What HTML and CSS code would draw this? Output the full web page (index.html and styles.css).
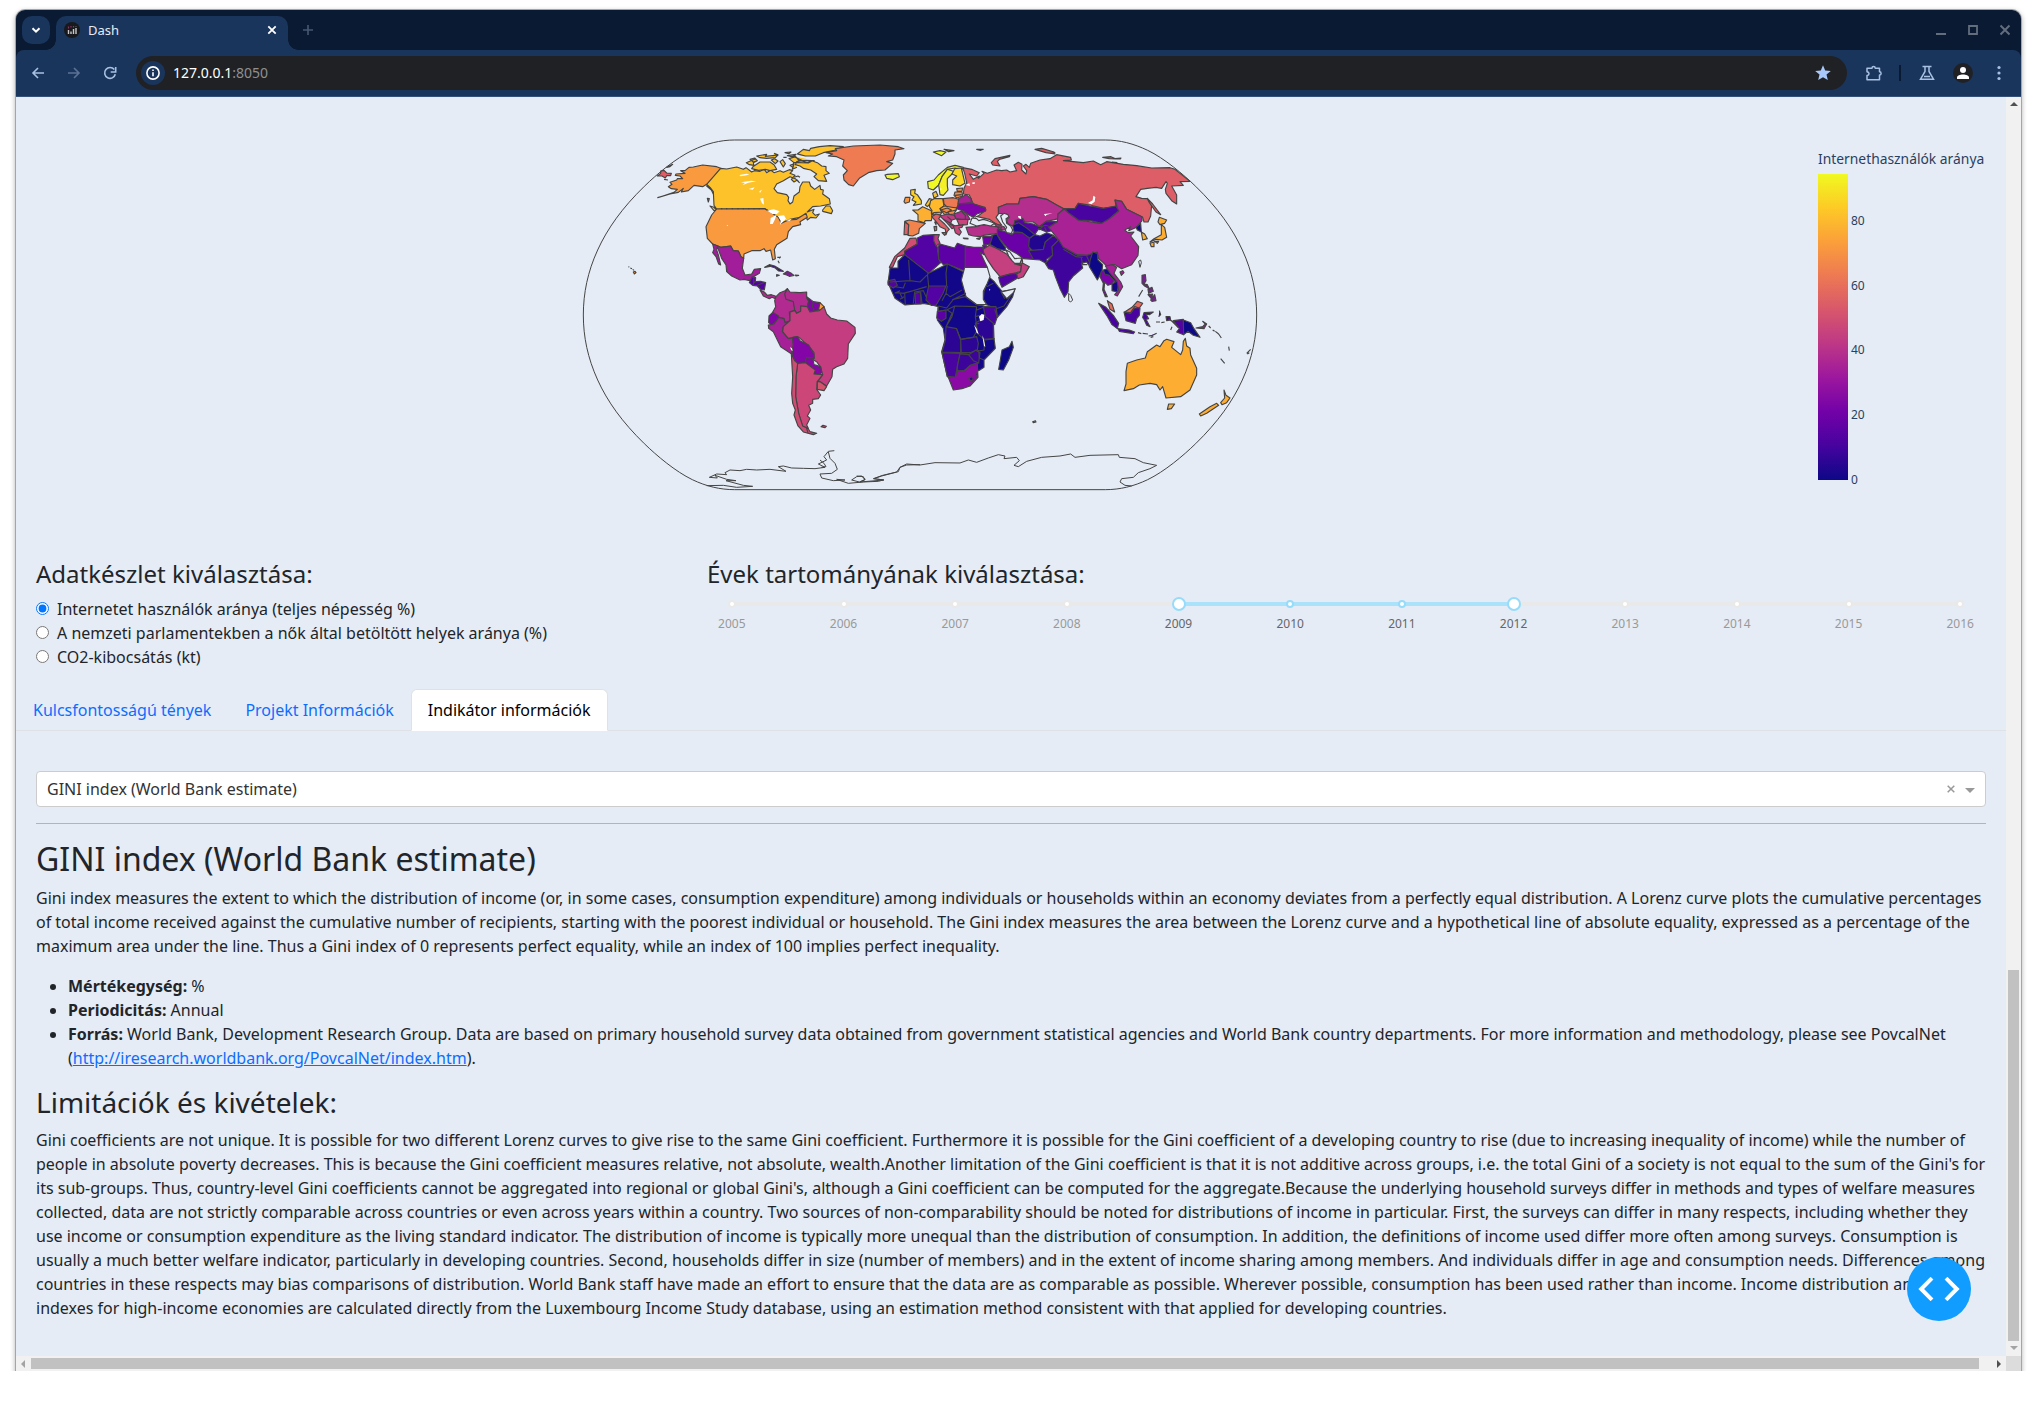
FILE: index.html
```html
<!DOCTYPE html>
<html lang="hu">
<head>
<meta charset="utf-8">
<title>Dash</title>
<link rel="stylesheet" href="styles.css">
</head>
<body>
<div class="window">
  <div class="tabstrip">
    <span class="tab-search"><svg width="28" height="28" viewBox="0 0 28 28"><path d="M10.5 12.2l3.5 3.5 3.5-3.5" fill="none" stroke="#fff" stroke-width="2"/></svg></span>
    <div class="browser-tab">
      <svg class="favicon" width="16" height="16" viewBox="0 0 16 16"><circle cx="8" cy="8" r="8" fill="#17191c"/><path d="M4.5 8v4M7 9.5V12M9.500 7v5M12 6v6" stroke="#c9c9c9" stroke-width="1.400"/><path d="M4.500 4.500v2M7 4v1.500" stroke="#8e2f62" stroke-width="1.200"/><path d="M9.500 4v1.500M12 4v1" stroke="#555" stroke-width="1.200"/></svg>
      <span class="browser-tab-title">Dash</span>
      <svg width="10" height="10" viewBox="0 0 10 10"><path d="M1.300 1.300l7.400 7.400M8.700 1.300L1.300 8.700" stroke="#fff" stroke-width="1.800"/></svg>
    </div>
    <svg class="new-tab" width="12" height="12" viewBox="0 0 12 12"><path d="M6 1v10M1 6h10" stroke="#465872" stroke-width="1.600"/></svg>
    <div class="window-buttons">
      <svg width="12" height="12" viewBox="0 0 12 12"><path d="M1 10h10" stroke="#626d7e" stroke-width="2"/></svg>
      <svg width="12" height="12" viewBox="0 0 12 12"><path d="M2 2h8v8H2z" fill="none" stroke="#626d7e" stroke-width="1.800"/></svg>
      <svg width="12" height="12" viewBox="0 0 12 12"><path d="M1.500 1.500l9 9M10.500 1.500l-9 9" stroke="#626d7e" stroke-width="2"/></svg>
    </div>
  </div>
  <div class="toolbar">
    <svg width="14" height="14" viewBox="0 0 14 14"><path d="M7 2L2 7l5 5M2 7h11" fill="none" stroke="#a8c0e2" stroke-width="1.600"/></svg>
    <svg width="14" height="14" viewBox="0 0 14 14"><path d="M7 2l5 5-5 5M12 7H1" fill="none" stroke="#5b7294" stroke-width="1.600"/></svg>
    <svg width="14" height="14" viewBox="0 0 14 14"><path d="M12.300 8.300A5.400 5.400 0 1 1 11.300 3.600" fill="none" stroke="#a8c0e2" stroke-width="1.600"/><path d="M12.700 1v5h-5" fill="none" stroke="#a8c0e2" stroke-width="1.600"/></svg>
    <div class="address">
      <span class="site-info"><svg width="14" height="14" viewBox="0 0 14 14"><circle cx="7" cy="7" r="6.100" fill="none" stroke="#fff" stroke-width="1.600"/><path d="M7 6.300v4" stroke="#fff" stroke-width="1.600"/><path d="M7 3.500v1.600" stroke="#fff" stroke-width="1.600"/></svg></span>
      <span class="url">127.0.0.1<span class="port">:8050</span></span>
      <svg class="star" width="18" height="18" viewBox="0 0 18 18"><path d="M9 1.200l2.200 5.200 5.600.5-4.300 3.700 1.300 5.500L9 13.200l-4.800 2.900 1.300-5.500L1.200 6.900l5.600-.5z" fill="#a8c7fa"/></svg>
    </div>
    <svg class="ext" width="18" height="18" viewBox="0 0 18 18"><path d="M2 4.200h5a1.600 1.600 0 0 1 3.200 0h4.300v3.600a1.500 1.500 0 0 1 0 3.200v4.800H2v-4.200c2.700-.3 2.700-3.600 0-3.900z" fill="none" stroke="#a8c0e2" stroke-width="1.500" stroke-linejoin="round"/></svg>
    <i class="divider"></i>
    <svg class="flask" width="16" height="16" viewBox="0 0 16 16"><path d="M3.500 1.500h9M6 1.500v5L1.500 14.200h13L10 6.500v-5M5 11.500h6" fill="none" stroke="#a8c0e2" stroke-width="1.500"/></svg>
    <svg class="avatar" width="20" height="20" viewBox="0 0 20 20"><circle cx="10" cy="10" r="10" fill="#202124"/><circle cx="10" cy="7" r="3" fill="#fff"/><path d="M4 16v-1.500c0-2 3-3 6-3s6 1 6 3V16z" fill="#fff"/></svg>
    <svg width="4" height="16" viewBox="0 0 4 16"><g fill="#a8c0e2"><circle cx="2" cy="2.500" r="1.600"/><circle cx="2" cy="8" r="1.600"/><circle cx="2" cy="13.500" r="1.600"/></g></svg>
  </div>
  <div class="viewport">
    <main class="page">
      <svg class="figure" width="1990" height="463" viewBox="16 97 1990 463">
        <defs>
          <linearGradient id="plasma" x1="0" y1="1" x2="0" y2="0">
            <stop offset="0" stop-color="#0d0887"/><stop offset=".111" stop-color="#46039f"/><stop offset=".222" stop-color="#7201a8"/><stop offset=".333" stop-color="#9c179e"/><stop offset=".444" stop-color="#bd3786"/><stop offset=".556" stop-color="#d8576b"/><stop offset=".667" stop-color="#ed7953"/><stop offset=".778" stop-color="#fb9f3a"/><stop offset=".889" stop-color="#fdca26"/><stop offset="1" stop-color="#f0f921"/>
          </linearGradient>
        </defs>
        <!-- Americas -->
        <g class="land" transform="translate(570 130) scale(.33333)">
          <path fill="#dd5e66" d="M262 138L272 130 272 123 282 121 290 129 304 130 302 137 290 137 286 144 276 138Z"/>
          <path fill="none" d="M290 112l18-9-8 7zM282 148l12 2M175 410l3 1M181 414l5 2M188 418l4 3"/>
          <path fill="#f99a3e" d="M190 426l5-2 3 4-5 4zM452 115L440 110 398 105 370 111 357 112 345 122 332 122 345 130 318 132 316 136 330 138 338 146 322 146 320 150 300 157 306 163 295 170 304 176 322 178 312 187 290 194 263 203 300 192 325 187 340 175 334 186 355 182 372 166 398 170 410 163 420 172 430 182 433 198 424 180 410 168Z"/>
          <path fill="#fdc229" d="M452 115L470 117 500 111 520 118 528 113 545 126 553 122 570 124 583 118 590 128 602 120 612 128 630 122 640 127 658 119 668 122 660 130 675 136 664 148 672 156 682 150 688 158 676 146 660 140 640 152 620 162 612 176 622 188 650 194 656 202 654 212 660 222 668 216 672 198 688 186 690 170 698 156 718 156 722 168 734 178 750 166 752 178 760 180 758 192 778 206 781 222 752 228 728 230 712 246 732 238 728 248 736 256 748 252 738 264 722 262 712 270 708 258 690 262 660 268 636 278 625 265 600 245 585 236 440 237 432 226 430 185 420 172 410 163ZM420 228L432 232 441 242 432 242ZM412 205l6 1-3 10zM758 240l10-12 12 0 8 14-4 9-14-4-12-3z"/>
          <path fill="#fdc229" d="M529 98L548 90 556 87 562 92 550 98 552 108 570 96 600 96 612 104 620 118 600 122 586 118 566 121 545 116 552 106 538 104ZM680 95L694 92 712 98 725 92 742 98 755 108 768 110 768 122 778 130 762 136 770 154 745 152 732 140 740 132 722 120 700 115 690 108 676 104ZM682 72L700 58 718 62 722 55 748 50 780 47 820 50 790 62 760 68 736 78 706 78 690 74ZM540 88l14-4 8 8-12 4zM560 78l30-5-4 6 38-4-8 8-26 2-20-2zM604 90l10-4 10 7-8 8zM630 95l8-6 8 12-6 10zM645 68l18-2-6 5zM652 77l26-4-8 8zM657 86l20-6 10 12 40 0-12 7-44-2zM660 106l12-5-3 12zM640 82l10 0M668 78l30 14 36 0M671 98l-4 20 14-6M612 70l12 4-14 3M672 142l12-4 6 4"/>
          <path fill="#f99a3e" d="M440 237H585L600 245 625 262 634 280 655 270 680 268 708 250 712 262 690 275 692 284 668 290 655 305 651 325 620 344 613 358 616 386 608 390 602 360 588 364 582 356 570 362 545 362 522 372 521 385 513 380 505 363 490 362 482 348 452 352 428 342 412 325 408 290 425 255Z"/>
          <path fill="none" d="M455 234v4M470 234v4M487 234v4M504 234v4M520 234v4M536 234v4M552 234v4M568 234v4"/>
          <path fill="#a21d9a" d="M428 342L444 348 452 352 482 348 490 362 505 363 513 380 521 385 517 415 525 435 545 432 553 418 572 416 568 430 548 442 540 452 522 448 510 450 485 438 470 425 468 405 455 385 442 350 440 360 446 378 452 405 446 402 438 380 428 368 432 358Z"/>
          <path fill="#5601a4" d="M538 458L546 441 557 443 556 455 572 454 587 458 583 480 572 478 562 468 548 466Z"/>
          <path fill="none" d="M552 443l-2 22M556 455l-6 6M562 466l20-8"/>
          <path fill="#b02a90" d="M570 480L584 487 592 496 604 494 616 498 618 507 606 502 598 506 580 498Z"/>
          <path fill="#46039f" d="M584 412L598 404 614 408 640 424 626 423 616 414 600 409ZM620 434l8 2-8 3zM676 435l10 1-8 2zM622 382l8 0M624 392l4 8M628 385l4-5"/>
          <path fill="#86169f" d="M640 432L652 424 664 430 672 436 658 439 650 435Z"/>
          <path fill="#b12a90" d="M618 500L630 488 645 482 652 476 646 490 650 506 670 512 675 540 658 546 660 572 645 578 642 566 626 562 608 547 617 530 614 512Z"/>
          <path fill="#b12a90" d="M652 476L660 486 690 488 710 486 710 504 716 514 712 530 692 528 692 544 680 550 674 540 670 515 648 508 644 492Z"/>
          <path fill="#8004a8" d="M710 500L730 515 728 530 734 542 720 546 712 530 716 514ZM730 515L750 518 748 540 734 542 727 530ZM596 578L597 558 608 547 626 558 626 566 612 580 606 586Z"/>
          <path fill="#fba139" d="M750 518L762 530 752 543 746 538Z"/>
          <path fill="#a62098" d="M595 585L612 582 626 562 642 566 645 578 658 574 640 590 637 605 648 618 655 625 668 622 670 645 665 672 632 650 622 630 610 605 596 595Z"/>
          <path fill="#c33d80" d="M660 546L675 542 680 550 692 544 692 528 712 530 720 546 748 542 762 530 770 552 782 564 802 570 830 573 855 592 856 610 835 642 833 685 822 702 800 710 788 718 786 740 770 768 745 752 758 735 752 712 740 695 730 690 732 668 716 648 690 625 683 620 655 625 638 605 640 590 660 572Z"/>
          <path fill="#8305a7" d="M668 622L683 620 690 632 716 645 732 672 733 685 710 683 706 700 683 700 674 692 666 672 670 645Z"/>
          <path fill="#8606a6" d="M706 690L712 683 728 684 732 704 752 710 755 728 745 734 730 732 736 720 710 704Z"/>
          <path fill="#cc4778" d="M683 700L706 698 736 720 732 732 758 734 742 755 740 778 752 795 745 806 728 808 728 820 716 826 722 840 712 858 720 865 710 885 715 895 698 890 686 850 677 800 678 740Z"/>
          <path fill="#d5536f" d="M742 754L752 756 770 770 762 782 742 778Z"/>
          <path fill="#cf4c74" d="M664 672L674 692 683 700 678 740 677 800 686 850 698 888 715 896 720 905 740 910 730 914 700 906 684 888 672 855 676 840 668 820 665 790 668 740ZM708 890l6 18M753 890l6-4 10 3-4 4z"/>
          <path fill="#ee7b51" d="M768 68L800 62 796 56 850 48 930 45 985 50 1002 56 975 60 975 72 968 90 950 95 968 100 945 120 920 122 895 128 868 145 850 168 836 164 822 150 820 135 832 122 818 108 822 90 800 80 775 78 788 72Z"/>
          <path fill="#f0f921" d="M945 135L952 133 985 131 988 140 968 149 950 145Z"/>
          <g class="lake"><path d="M508 135l22-4 8 3-26 5zM513 157l30-5 16 2-24 4-18 8 8-7zM536 177l18-5-6 7zM568 184l8-5-6 10zM570 206l10-2 2 20-6-4zM591 242l20-4 18 6-8 8-14 0zM600 282l2-18 18-10-6 16-6 12zM624 258l18-2 6 10-18 18 2-12zM645 270l20-3-6 6zM470 285l4 1-2 3zM660 652l6 3 2 8-4-2z"/></g>
          <path class="coast" d="M793 962L775 964 762 980 770 990 745 1002 765 1012 735 1016 700 1015 665 1014 640 1008 625 1010 648 1024 600 1018 560 1020 530 1018 510 1022 480 1020 465 1028 470 1034 440 1032 418 1042 442 1044 435 1036 470 1048 498 1052 468 1052 520 1066 548 1069 500 1072 460 1066 410 1067M775 966L780 985 795 1000 802 1018 785 1030 750 1032 755 1044 790 1052 825 1050 800 1048 835 1060 880 1056 925 1054 940 1050 912 1046 935 1038 985 1025 990 1012 1010 1005 1050 1004M845 1050l15-10 14-2 12 10-18 8zM750 990l12 10 6 10-14 2"/>
        </g>
        <!-- Europe, Africa, Asia and Oceania -->
        <g class="land" transform="translate(860 130) scale(.33333)">
          <path fill="#dd5e66" d="M308 113L335 118 358 128 350 138 328 132 340 148 358 138 355 145 372 130 366 124 382 130 410 120 425 122 440 120 450 126 470 122 462 105 475 97 486 103 485 120 498 132 500 122 490 108 498 103 508 112 512 100 540 90 570 86 590 74 632 82 634 90 610 92 670 98 700 93 722 104 740 95 790 103 830 107 875 114 930 113 945 118 990 154 960 155 970 166 935 168 950 195 950 222 935 212 918 190 916 178 922 160 918 155 905 175 888 172 862 175 842 178 828 200 845 205 862 206 875 225 872 258 864 276 852 276 848 262 840 258 800 238 785 214 765 210 768 230 730 235 690 225 655 220 645 236 612 236 590 225 560 208 520 200 480 205 476 222 440 222 415 232 418 248 408 262 425 285 412 285 388 268 352 260 378 240 375 232 340 222 328 195 310 192 312 175 320 158 314 130Z"/>
          <path fill="#dd5e66" d="M862 205L878 222 902 254 888 246 868 218ZM398 105L394 98 405 86 450 76 448 80 418 88 412 95 420 108ZM525 58L545 55 582 66 585 72 558 68ZM728 82l25-2 15 7-20-1zM765 86l18-2-2 3zM756 96l16 2M570 70l16-2M350 58l20 0-8 3z"/>
          <path fill="#f0f921" d="M220 66L240 62 258 66 245 77ZM252 58l30 4-16 3z"/>
          <path fill="#f0f921" d="M203 155L222 150 235 135 262 112 285 106 310 112 305 120 285 114 262 118 246 140 236 165 220 180 205 175Z"/>
          <path fill="#f3f027" d="M236 165L246 140 262 118 280 124 276 132 262 146 262 168 264 180 250 196 240 194Z"/>
          <path fill="#fad824" d="M276 132L284 116 304 114 315 160 300 168 278 164 278 150 290 138Z"/>
          <path fill="#fdc627" d="M218 190L228 184 234 198 222 204Z"/>
          <path fill="#f58c46" d="M290 176L308 174 306 184 292 184ZM285 186L306 186 308 198 290 204 282 196Z"/>
          <path fill="#fcd025" d="M152 180L166 178 164 190 172 194 184 212 184 222 160 226 168 216 156 210 162 200 152 194Z"/>
          <path fill="#f89540" d="M132 215L136 202 150 202 148 216 136 220Z"/>
          <path fill="#fdaf31" d="M158 240L174 240 188 230 214 242 216 262 214 272 196 272 192 278 174 272 174 254Z"/>
          <path fill="#f1834c" d="M134 274L148 270 186 278 196 280 178 296 176 310 158 318 144 316 146 284Z"/>
          <path fill="#de5f65" d="M134 276L146 284 144 314 132 314Z"/>
          <path fill="#fdc627" d="M196 225L208 206 216 208 210 222 202 230Z"/>
          <path fill="#feba2c" d="M212 212L222 206 248 206 252 228 240 236 246 248 214 250 216 242 208 230Z"/>
          <path fill="#ed7953" d="M250 206L280 203 296 208 294 226 290 234 262 232 252 222Z"/>
          <path fill="#fb9f3a" d="M240 236L252 228 290 234 288 242 266 254 252 252ZM222 248L246 246 240 256 216 254Z"/>
          <path fill="#f48849" d="M242 240l20-6 12 6-14 8zM264 246L288 240 282 252 268 254Z"/>
          <path fill="#de5f65" d="M215 260L228 252 244 256 236 266 254 282 268 298 262 304 258 314 256 298 240 290 226 272ZM246 308l14 0-6 8zM222 290l8-1 0 12-6 2zM224 276l4 0 0 8z"/>
          <path fill="#c23c81" d="M240 258L262 252 284 256 288 266 276 270 272 280 288 290 276 296 262 280 250 268Z"/>
          <path fill="#b12a90" d="M282 252L304 244 318 248 330 268 312 270 288 266Z"/>
          <path fill="#c9447a" d="M290 268L324 268 322 284 298 286ZM280 288L310 284 306 292 296 294 304 306 298 316 286 308ZM310 324l14 1 0 2-12-1zM350 326l12-3-4 5z"/>
          <path fill="#a62098" d="M296 206L318 194 334 206 334 218 294 222Z"/>
          <path fill="#7e03a8" d="M290 236L296 222 336 220 376 234 376 244 350 252 340 262 326 254 312 244Z"/>
          <path fill="none" d="M250 268l22 12M262 260l12 10M268 282l14 6M306 246l10 10 0 14M285 196l20-2M344 262l10-4"/>
          <path fill="#b6308b" d="M318 292L345 290 372 284 395 288 425 292 412 310 370 316 362 320 340 318 326 314ZM400 278l32 12 6 10-20-2z"/>
          <path fill="#b42e8d" d="M415 232L440 222 476 222 480 205 520 200 560 208 590 225 612 237 594 252 596 266 560 274 538 290 520 276 494 276 488 266 474 270 466 286 456 288 443 280 440 268 448 262 440 252 415 250Z"/>
          <path fill="#5302a3" d="M464 272L488 266 494 278 520 282 538 290 560 274 592 275 568 290 586 300 560 306 536 296 524 314 500 296 476 280 462 288Z"/>
          <path fill="#1b068d" d="M458 286L476 278 500 294 524 314 508 324 486 308 462 306Z"/>
          <path fill="none" d="M538 290l20-4 12 4M536 300l14-12M560 306l-6-14"/>
          <path fill="#6a00a8" d="M412 298L432 304 455 314 464 306 486 308 508 324 508 350 520 388 490 386 472 372 446 358 430 340 412 316Z"/>
          <path fill="#220690" d="M508 326L524 314 540 318 560 308 580 316 556 336 550 358 520 364 506 350Z"/>
          <path fill="#3c049b" d="M506 362L550 358 556 336 580 316 596 330 576 350 578 376 560 388 562 402 540 390 520 388Z"/>
          <path fill="#1b068d" d="M396 316L410 312 420 330 436 352 436 362 412 356 388 342Z"/>
          <path fill="#6a00a8" d="M368 320L398 318 390 342 372 346ZM368 346L380 348 372 362Z"/>
          <path fill="#c5407e" d="M366 360L388 346 412 356 440 372 456 392 484 408 482 425 450 432 420 440 400 416 384 392Z"/>
          <path fill="#5302a3" d="M416 442L450 432 470 430 476 442 426 472 420 458Z"/>
          <path fill="#c43e7f" d="M486 398L508 410 490 440 474 446 470 432 482 425Z"/>
          <path fill="#fca338" d="M464 402L480 402 486 384 488 396 482 406Z"/>
          <path fill="#a82296" d="M612 237L620 244 655 270 720 280 745 268 775 245 765 210 785 214 800 238 846 260 846 272 830 292 806 302 812 290 794 300 804 308 822 306 812 318 836 350 834 376 815 404 785 416 765 404 740 408 728 396 716 386 712 368 682 376 650 374 605 350 596 330 566 292 592 275 594 252Z"/>
          <path fill="#a82296" d="M780 426l8-4 4 6-8 8z"/>
          <path fill="#4903a0" d="M615 237L645 236 655 220 690 228 730 235 768 228 776 242 745 268 725 280 690 272 655 270 625 248Z"/>
          <path fill="#3e049c" d="M576 350L596 330 610 352 652 376 682 376 712 366 706 384 690 410 680 396 664 400 668 414 640 438 626 456 624 486 613 502 600 476 586 440 580 420 566 416 556 400 578 376Z"/>
          <path fill="none" d="M610 358l38 22 20 2M664 384l4 20 14 0M680 378l8 18"/>
          <path fill="#0d0887" d="M690 392L698 366 712 370 714 390 728 404 726 424 712 450 700 430 688 410Z"/>
          <path fill="#7e03a8" d="M724 424L738 420 752 436 768 444 756 462 744 466 734 456 732 478 742 500 736 500 728 480 730 460 720 440Z"/>
          <path fill="#150789" d="M730 420L742 416 758 436 776 462 772 486 756 482 756 462 766 456 748 436 734 432ZM828 292L842 280 844 306 832 300Z"/>
          <path fill="#a62098" d="M736 408L758 404 770 412 762 430 782 456 788 470 772 498 764 494 776 480 772 456 752 432Z"/>
          <path fill="#e56b5d" d="M742 512L756 522 764 546 750 538ZM794 546L816 532 832 514 848 520 838 534 824 530 812 548Z"/>
          <path fill="#4903a0" d="M716 520L738 532 760 556 776 580 772 596 756 584 740 556ZM774 596L808 600 824 606 820 611 778 604ZM792 546L812 550 824 534 840 534 838 556 830 566 826 580 798 572ZM848 562L852 548 880 546 868 554 858 552 866 566 858 568 870 590 860 586 852 568ZM834 608l10 3M848 610l16 2M866 618l12-2 12-6M880 620l-8 2M898 542l4 12-6 6M888 576l12 0M904 578l10-2M918 560l12 0 2 10-12 2zM926 568l20 10 8 14-18-18zM936 590l-4 10"/>
          <path fill="#5302a3" d="M940 572L970 568 971 614 950 606 958 596Z"/>
          <path fill="#0d0887" d="M970 570L992 578 1002 596 1020 622 1000 616 984 604 971 614Z"/>
          <path fill="#7b2d7b" d="M1008 594l20-4 8-8-8-8 12 8-8 14zM1046 588l6 6M1058 600l6 4M1066 604l10 8M1076 612l8 12M1106 650l2 12M1082 686l12 14M1160 670l12-12M1162 672l6-4"/>
          <path fill="#7a1c96" d="M846 436L856 434 858 452 852 462 862 464 868 476 854 468 846 460ZM864 478l12-6 4 12-14 6zM864 494l14-2-4 14zM872 510l12-16 4 18-12 2zM836 500l12-20"/>
          <path fill="#fdae32" d="M844 306L854 312 862 326 848 330ZM898 262L920 270 914 280 900 284 894 276ZM904 284L914 292 920 322 906 330 888 328 870 336 882 326 904 314ZM870 340l12-4 0 14-8 0zM884 334l12 0-4 6z"/>
          <path class="coast" d="M836 394l6-4 2 8-4 14zM626 490l6 6 6 14-6 6-6-4z"/>
          <path fill="#fdae32" d="M802 700L830 690 856 684 862 665 890 645 900 650 912 632 920 628 942 635 935 652 962 674 968 660 970 634 976 625 980 648 990 655 992 675 1010 715 1010 735 990 780 962 800 918 804 908 770 900 780 890 764 870 760 838 765 820 776 792 782 798 762 798 725ZM926 822L944 822 934 836 922 838ZM1092 780L1098 796 1110 804 1100 818 1086 824 1082 818 1094 804ZM1018 852L1050 830 1070 820 1076 826 1040 850 1022 858Z"/>
          <!-- Africa -->
          <path fill="#d14e72" d="M134 354L150 325 168 324 172 342 134 364 134 374 112 380 98 412 88 412 104 380Z"/>
          <path fill="#5302a3" d="M172 324L190 316 222 314 224 335 232 352 236 385 242 398 206 430 134 374 134 364 172 342Z"/>
          <path fill="#c03a83" d="M222 314L238 314 234 326 240 340 228 348 221 332Z"/>
          <path fill="#5c01a6" d="M234 350L240 342 284 354 292 340 316 348 316 424 262 402 250 404 236 388Z"/>
          <path fill="#7e03a8" d="M316 348L342 352 368 352 372 374 360 366 382 412 316 412Z"/>
          <path fill="#110788" d="M90 414H114V394L134 374 206 430 262 402 312 426 306 450 318 490 350 524 372 528 380 560 400 572 402 625 406 655 372 690 372 712 356 722 320 700 290 740 262 740 245 665 255 630 250 595 232 570 235 530 215 525 190 520 135 525 105 505 84 458Z"/>
          <path fill="#110788" d="M382 455L388 442 402 454 414 470 426 484 464 478 458 500 440 530 412 562 408 536 380 524 370 508 372 484Z"/>
          <path class="sudan" d="M314 412H382L390 440 382 460 370 484 370 508 380 524 350 524 318 500 304 450Z"/>
          <path fill="#5302a3" d="M200 496L206 468 258 468 248 492 228 526 214 526 198 510ZM85 452L104 448 112 466 100 474 84 464ZM165 490l16-4 2 36-16 0z"/>
          <path fill="#4903a0" d="M370 530L408 530 412 560 404 584 376 560ZM246 668L300 670 292 710 286 742 262 740Z"/>
          <path fill="#5c01a6" d="M232 544L258 540 258 565 244 574 230 564Z"/>
          <path fill="#2d0594" d="M258 590L290 596 302 630 302 668 246 666 256 632ZM302 628L350 620 355 640 352 660 330 668 304 668ZM346 580L376 560 400 580 400 626 372 628 352 610Z"/>
          <path fill="#3c049b" d="M292 710L300 672 326 674 348 660 360 668 356 698 330 706 312 722 292 722Z"/>
          <path fill="#8b0aa5" d="M264 740L286 742 292 722 312 724 332 706 352 700 354 742 330 768 306 776 280 780Z"/>
          <path fill="#2d0594" d="M326 746l8-6 6 6-6 8zM348 728l4 4-2 6-4-4z"/>
          <path fill="#0d0887" d="M416 718L420 696 426 660 448 650 456 634 460 652 446 690 430 720Z"/>
          <path fill="none" d="M146 390L150 452 90 456M150 452L180 456 206 430M262 402L258 430 260 468M206 468L202 430M104 470L130 474 136 458M130 490L160 482 200 470M136 524L134 490 106 488M104 490L120 482M120 508L132 500M160 520L164 486 190 482 198 500M182 486L186 520M262 468L258 490 270 500 306 480M235 528L260 534 280 508 316 500 350 524M258 490L246 512M234 532L234 544 260 540 284 528 350 530M262 540L276 550 258 590M284 528L276 560 258 590M350 530L346 560 352 600 340 622 302 628M350 540L374 530M346 560L360 556M302 628L290 598M376 630L404 626M374 628L372 660 350 664M300 670L330 668M326 674L340 692 358 700M372 690L358 684 356 660M404 538L412 562M120 490L128 506M318 490L276 510M346 582L358 580M380 470L400 460M408 536L432 528 464 480M422 484L434 506"/>
          <g class="lake"><path d="M357 560l8-8 8 2-2 16-10 4zM342 584l8 12 6 16-6-4zM368 616l5 20 3 14-4-2-4-24zM316 165l12-5 2 8-10-2zM336 158l8-2 0 6-6 0zM684 219l14-8 2-14 6 4-2 14-10 8zM474 258l8 0 2 10-8-4zM552 252l26-2-18 4-4 5zM388 476l3 3-3 3zM242 173l3 5-4 2z"/></g>
          <path fill="#e5ecf6" d="M422 258L432 250 444 254 446 261 438 266 440 280 452 288 458 300 454 311 440 308 436 300 440 292 428 276Z"/>
          <path fill="#e5ecf6" d="M330 280L336 264 350 266 356 272 370 268 384 272 404 280 392 288 372 284 350 288Z"/>
          <path fill="#e5ecf6" d="M438 360L450 366 464 386 486 384 480 400 464 400 456 392 446 378ZM424 486L466 476 460 488 440 506Z"/>
          <path fill="none" d="M518 875l8-3 2 4-8 2z"/>
          <path class="coast" d="M-10 1038L10 1040 14 1050 0 1056 72 1050 40 1046 68 1036 110 1026 120 1012 140 1002 180 1005 225 998 300 999 325 990 350 997 385 984 415 974 435 978 432 986 470 982 478 992 462 1006 475 1010 500 994 545 982 600 978 632 972 645 982 690 976 775 974 778 982 825 986 850 998 890 1006 870 1016 835 1028 820 1042 785 1046 780 1056 795 1066 815 1068"/>
        </g>
        <path class="frame" transform="translate(570 130) scale(.33333)" d="M494 30C450 30 409 41 367 61C317 85 260 133 223 169C157 233 112 296 83 360C53 425 40 490 40 555C40 620 53 684 83 750C112 814 157 877 223 941C260 977 317 1025 367 1049C409 1069 450 1079 494 1079H1606C1650 1079 1691 1069 1733 1049C1783 1025 1840 977 1877 941C1943 877 1988 814 2017 750C2047 684 2060 620 2060 555C2060 490 2047 425 2017 360C1988 296 1943 233 1877 169C1840 133 1783 85 1733 61C1691 41 1650 30 1606 30Z"/>
        <rect x="1818" y="174" width="30" height="306" fill="url(#plasma)"/>
        <g class="scale-text">
          <text class="scale-title" x="1818" y="164">Internethasználók aránya</text>
          <text x="1851" y="225">80</text><text x="1851" y="290">60</text><text x="1851" y="354">40</text><text x="1851" y="419">20</text><text x="1851" y="484">0</text>
        </g>
      </svg>

      <section class="controls">
        <div class="dataset">
          <h4>Adatkészlet kiválasztása:</h4>
          <label><input type="radio" name="dataset" checked>Internetet használók aránya (teljes népesség %)</label>
          <label><input type="radio" name="dataset">A nemzeti parlamentekben a nők által betöltött helyek aránya (%)</label>
          <label><input type="radio" name="dataset">CO2-kibocsátás (kt)</label>
        </div>
        <div class="years">
          <h4>Évek tartományának kiválasztása:</h4>
          <div class="slider">
            <div class="rail"></div>
            <div class="mark"><i></i><span>2005</span></div>
            <div class="mark"><i></i><span>2006</span></div>
            <div class="mark"><i></i><span>2007</span></div>
            <div class="mark"><i></i><span>2008</span></div>
            <div class="mark active handle"><i></i><span>2009</span></div>
            <div class="mark active"><i></i><span>2010</span></div>
            <div class="mark active"><i></i><span>2011</span></div>
            <div class="mark active handle"><i></i><span>2012</span></div>
            <div class="mark"><i></i><span>2013</span></div>
            <div class="mark"><i></i><span>2014</span></div>
            <div class="mark"><i></i><span>2015</span></div>
            <div class="mark"><i></i><span>2016</span></div>
          </div>
        </div>
      </section>

      <nav class="tabs">
        <a>Kulcsfontosságú tények</a>
        <a>Projekt Információk</a>
        <a class="selected">Indikátor információk</a>
      </nav>

      <section class="indicator">
        <div class="dropdown">
          <span class="dropdown-value">GINI index (World Bank estimate)</span>
          <svg width="8" height="8" viewBox="0 0 8 8"><path d="M.7.700l6.600 6.600M7.300.7L.7 7.300" stroke="#999" stroke-width="1.500"/></svg>
          <i class="arrow"></i>
        </div>
        <hr>
        <h2>GINI index (World Bank estimate)</h2>
        <p>Gini index measures the extent to which the distribution of income (or, in some cases, consumption expenditure) among individuals or households within an economy deviates from a perfectly equal distribution. A Lorenz curve plots the cumulative percentages of total income received against the cumulative number of recipients, starting with the poorest individual or household. The Gini index measures the area between the Lorenz curve and a hypothetical line of absolute equality, expressed as a percentage of the maximum area under the line. Thus a Gini index of 0 represents perfect equality, while an index of 100 implies perfect inequality.</p>
        <ul>
          <li><strong>Mértékegység:</strong> %</li>
          <li><strong>Periodicitás:</strong> Annual</li>
          <li><strong>Forrás:</strong> World Bank, Development Research Group. Data are based on primary household survey data obtained from government statistical agencies and World Bank country departments. For more information and methodology, please see PovcalNet (<a class="link">http://iresearch.worldbank.org/PovcalNet/index.htm</a>).</li>
        </ul>
        <h3>Limitációk és kivételek:</h3>
        <p>Gini coefficients are not unique. It is possible for two different Lorenz curves to give rise to the same Gini coefficient. Furthermore it is possible for the Gini coefficient of a developing country to rise (due to increasing inequality of income) while the number of people in absolute poverty decreases. This is because the Gini coefficient measures relative, not absolute, wealth.Another limitation of the Gini coefficient is that it is not additive across groups, i.e. the total Gini of a society is not equal to the sum of the Gini's for its sub-groups. Thus, country-level Gini coefficients cannot be aggregated into regional or global Gini's, although a Gini coefficient can be computed for the aggregate.Because the underlying household surveys differ in methods and types of welfare measures collected, data are not strictly comparable across countries or even across years within a country. Two sources of non-comparability should be noted for distributions of income in particular. First, the surveys can differ in many respects, including whether they use income or consumption expenditure as the living standard indicator. The distribution of income is typically more unequal than the distribution of consumption. In addition, the definitions of income used differ more often among surveys. Consumption is usually a much better welfare indicator, particularly in developing countries. Second, households differ in size (number of members) and in the extent of income sharing among members. And individuals differ in age and consumption needs. Differences among countries in these respects may bias comparisons of distribution. World Bank staff have made an effort to ensure that the data are as comparable as possible. Wherever possible, consumption has been used rather than income. Income distribution and Gini indexes for high-income economies are calculated directly from the Luxembourg Income Study database, using an estimation method consistent with that applied for developing countries.</p>
      </section>
      <div class="debug-button"><svg width="42" height="24" viewBox="0 0 42 24"><path d="M14 1.200L3.200 12 14 22.800M28 1.200L38.800 12 28 22.800" fill="none" stroke="#fff" stroke-width="4"/></svg></div>
    </main>
    <div class="scroll-y"><i class="up"></i><b></b><i class="down"></i></div>
    <div class="scroll-x"><i class="left"></i><b></b><i class="right"></i></div>
    <div class="corner"></div>
  </div>
</div>
</body>
</html>
```
FILE: styles.css
```css
* { box-sizing: border-box; }
body { margin: 0; background: #fff; font-family: "Noto Sans", sans-serif; font-size: 16px; line-height: 1.5; color: #212529; }
h2, h3, h4, p, ul { margin: 0; }
h2, h3, h4 { font-weight: 400; line-height: 1.2; margin-bottom: 8px; }
h2 { font-size: 32px; }
h3 { font-size: 28px; }
h4 { font-size: 24px; }
p { margin-bottom: 16px; }
svg { display: block; flex: none; }

.window { width: 2005px; height: 1361px; margin: 10px 0 0 16px; border-radius: 9px 9px 0 0; background: #0a1a33; box-shadow: 0 0 0 1px #a3a5a8, 0 2px 5px 1px rgba(0,0,0,.3); display: flex; flex-direction: column; overflow: visible; }

.tabstrip { height: 40px; display: flex; align-items: flex-start; padding: 6px 10px 0 6px; }
.tab-search { width: 28px; height: 28px; border-radius: 10px; background: #1a355c; }
.browser-tab { position: relative; width: 232px; height: 34px; margin-left: 6px; padding: 0 11px 6px 8px; border-radius: 10px 10px 0 0; background: #1a355c; display: flex; align-items: center; }
.browser-tab::before, .browser-tab::after { content: ""; position: absolute; bottom: 0; width: 10px; height: 10px; }
.browser-tab::before { left: -10px; background: radial-gradient(circle at 0 0, transparent 9.5px, #1a355c 10px); }
.browser-tab::after { right: -10px; background: radial-gradient(circle at 100% 0, transparent 9.5px, #1a355c 10px); }
.browser-tab-title { flex: 1; margin-left: 8px; font-size: 13px; line-height: 18px; color: #e6ebf3; }
.new-tab { margin: 8px 0 0 14px; }
.window-buttons { margin: 8px 0 0 auto; display: flex; gap: 20px; }

.toolbar { height: 47px; padding: 0 20px 1px 15px; border-bottom: 1px solid #345079; border-radius: 8px 8px 0 0; background: #1a355c; display: flex; align-items: center; }
.toolbar > svg + svg { margin-left: 22px; }
.address { flex: 1; height: 34px; margin-left: 19px; padding: 0 15px 0 5px; border-radius: 17px; background: #202124; display: flex; align-items: center; }
.site-info { width: 24px; height: 24px; border-radius: 12px; background: #1a355c; display: grid; place-items: center; }
.url { flex: 1; margin-left: 8px; font-size: 14px; line-height: 20px; color: #fff; }
.port { color: #8e9092; }
.ext { margin-left: 18px; }
.divider { width: 2px; height: 16px; margin-left: 16px; background: #0a1a33; }
.toolbar > .flask { margin-left: 18px; }
.toolbar > .avatar { margin-left: 18px; }
.toolbar > .avatar + svg { margin-left: 24px; }

.viewport { flex: 1; display: grid; grid-template: 1259px 15px / 1990px 15px; }
.page { position: relative; background: #e5ecf6; overflow: hidden; }
.land { stroke: #444; stroke-width: 3.4; stroke-linejoin: round; }
.lake { fill: #fff; stroke: none; }
.coast { fill: none; stroke-width: 3; }
.sudan { fill: #e5ecf6; }
.frame { fill: none; stroke: #444; stroke-width: 3; }
.scale-text { fill: #2a3f5f; font-size: 12px; }
.scale-title { font-size: 13.85px; }

.controls { display: flex; height: 126px; padding: 0 20px; }
.dataset { flex: none; width: 671px; }
.dataset label { display: block; height: 24px; white-space: nowrap; }
.dataset input { width: 13px; height: 13px; margin: 0 8px 0 0; }
.years { flex: 1; min-width: 0; }
.slider { position: relative; display: flex; width: 1340px; margin-left: -31px; height: 40px; }
.rail { position: absolute; left: 56px; top: 5px; width: 1228px; height: 4px; border-radius: 2px; background: linear-gradient(90deg, #e9e9e9 446.500px, #abe2fb 446.500px 781.500px, #e9e9e9 781.500px); }
.mark { position: relative; flex: 1; display: flex; flex-direction: column; align-items: center; font-size: 12px; color: #999; }
.mark i { width: 8px; height: 8px; margin-top: 3px; border: 2px solid #e9e9e9; border-radius: 50%; background: #fff; }
.mark span { margin-top: 7px; line-height: 18px; }
.mark.active { color: #666; }
.mark.active i { border-color: #96dbfa; }
.mark.handle i { width: 14px; height: 14px; margin-top: 0; }
.mark.handle span { margin-top: 4px; }

.tabs { display: flex; height: 45px; padding-top: 3px; border-bottom: 1px solid #dee2e6; }
.tabs a { height: 42px; padding: 8px 16px; border: 1px solid transparent; color: #0d6efd; }
.tabs .selected { border-color: #dee2e6 #dee2e6 #fff; border-radius: 6px 6px 0 0; background: #fff; color: #000; }

.indicator { padding: 40px 20px 0; }
.dropdown { height: 36px; padding: 0 10px; border: 1px solid #ccc; border-radius: 4px; background: #fff; color: #333; display: flex; align-items: center; }
.dropdown-value { flex: 1; }
.arrow { margin: 3px 0 0 10px; border: 5px solid transparent; border-top-color: #999; border-bottom: 0; }
hr { height: 1px; margin: 16px 0; border: 0; background: #b0b5bd; }
ul { margin-bottom: 16px; padding-left: 32px; }
.link { color: #0d6efd; text-decoration: underline; }
.debug-button { position: absolute; right: 35px; bottom: 35px; width: 64px; height: 64px; border-radius: 50%; background: #119dff; display: grid; place-items: center; }

.scroll-y { display: flex; flex-direction: column; align-items: center; background: #f1f1f1; }
.scroll-y b { width: 11px; height: 371px; margin-top: 864px; background: #c1c1c1; }
.up { margin-top: 5px; border: 4px solid transparent; border-bottom-color: #505050; border-top: 0; }
.down { margin-top: 5px; border: 4px solid transparent; border-top-color: #a3a3a3; border-bottom: 0; }
.scroll-x { display: flex; align-items: center; background: #f1f1f1; }
.scroll-x b { width: 1948px; height: 11px; margin-left: 6px; background: #c1c1c1; }
.left { margin-left: 5px; border: 4px solid transparent; border-right-color: #a3a3a3; border-left: 0; }
.right { margin-left: 18px; border: 4px solid transparent; border-left-color: #505050; border-right: 0; }
.corner { background: #dcdcdc; }
```
